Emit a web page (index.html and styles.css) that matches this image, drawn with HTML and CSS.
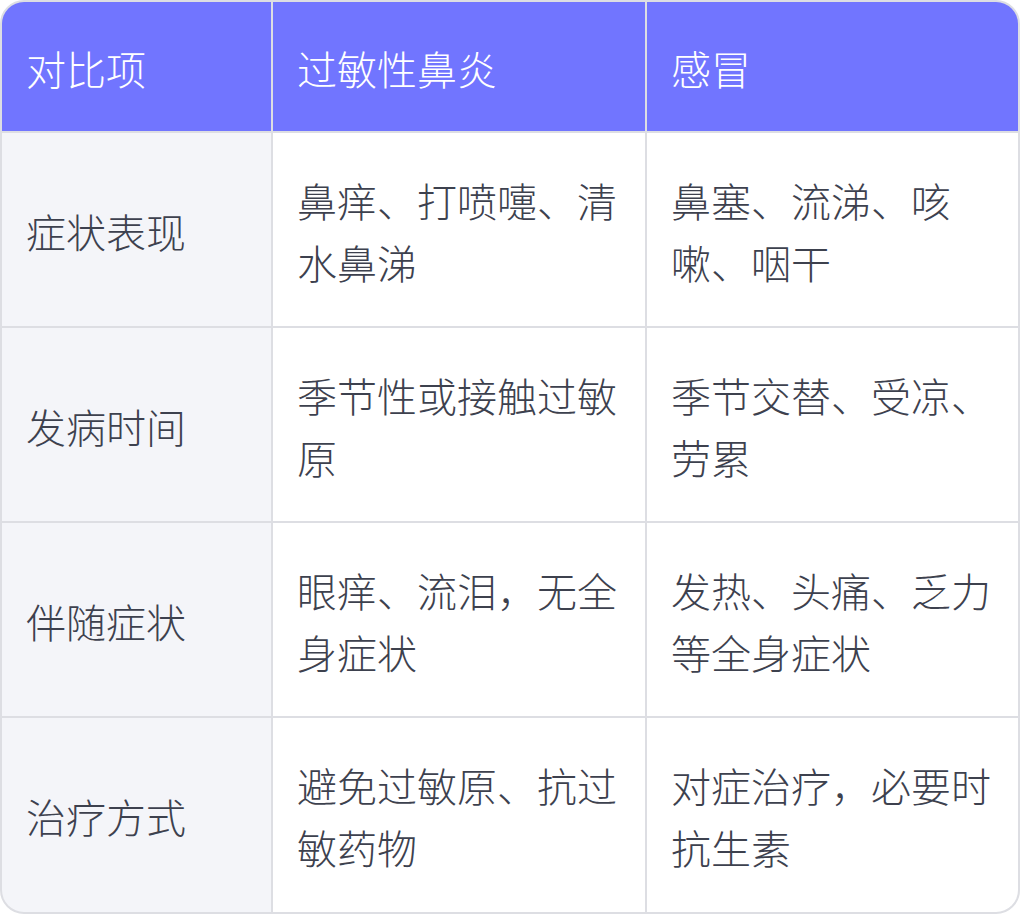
FILE: index.html
```html
<!DOCTYPE html>
<html lang="zh-CN">
<head>
<meta charset="utf-8">
<title>过敏性鼻炎与感冒对比</title>
<link rel="stylesheet" href="styles.css">
</head>
<body>
<div class="compare-table">
  <div class="cell head">对比项</div>
  <div class="cell head">过敏性鼻炎</div>
  <div class="cell head">感冒</div>

  <div class="cell label">症状表现</div>
  <div class="cell">鼻痒、打喷嚏、清水鼻涕</div>
  <div class="cell">鼻塞、流涕、咳嗽、咽干</div>

  <div class="cell label">发病时间</div>
  <div class="cell">季节性或接触过敏原</div>
  <div class="cell">季节交替、受凉、劳累</div>

  <div class="cell label">伴随症状</div>
  <div class="cell">眼痒、流泪，无全身症状</div>
  <div class="cell">发热、头痛、乏力等全身症状</div>

  <div class="cell label">治疗方式</div>
  <div class="cell">避免过敏原、抗过敏药物</div>
  <div class="cell">对症治疗，必要时抗生素</div>
</div>
</body>
</html>
```

FILE: styles.css
```css
html, body {
  margin: 0;
  padding: 0;
  background: #ffffff;
}

.compare-table {
  box-sizing: border-box;
  width: 1020px;
  height: 914px;
  border: 2px solid #dddee3;
  border-radius: 24px;
  overflow: hidden;
  display: grid;
  grid-template-columns: 269px 372px 1fr;
  grid-template-rows: 129px 193px 193px 193px 1fr;
  gap: 2px;
  background: #dddee3;
  font-family: "Noto Sans CJK SC", "Noto Sans", sans-serif;
  font-weight: 300;
  font-size: 40px;
  line-height: 62px;
  color: #3d414e;
}

.cell {
  background: #ffffff;
  display: flex;
  align-items: center;
  padding: 2px 24px 0;
}

.head {
  background: #7175ff;
  color: #ffffff;
}

.label {
  background: #f4f5f9;
}
```
